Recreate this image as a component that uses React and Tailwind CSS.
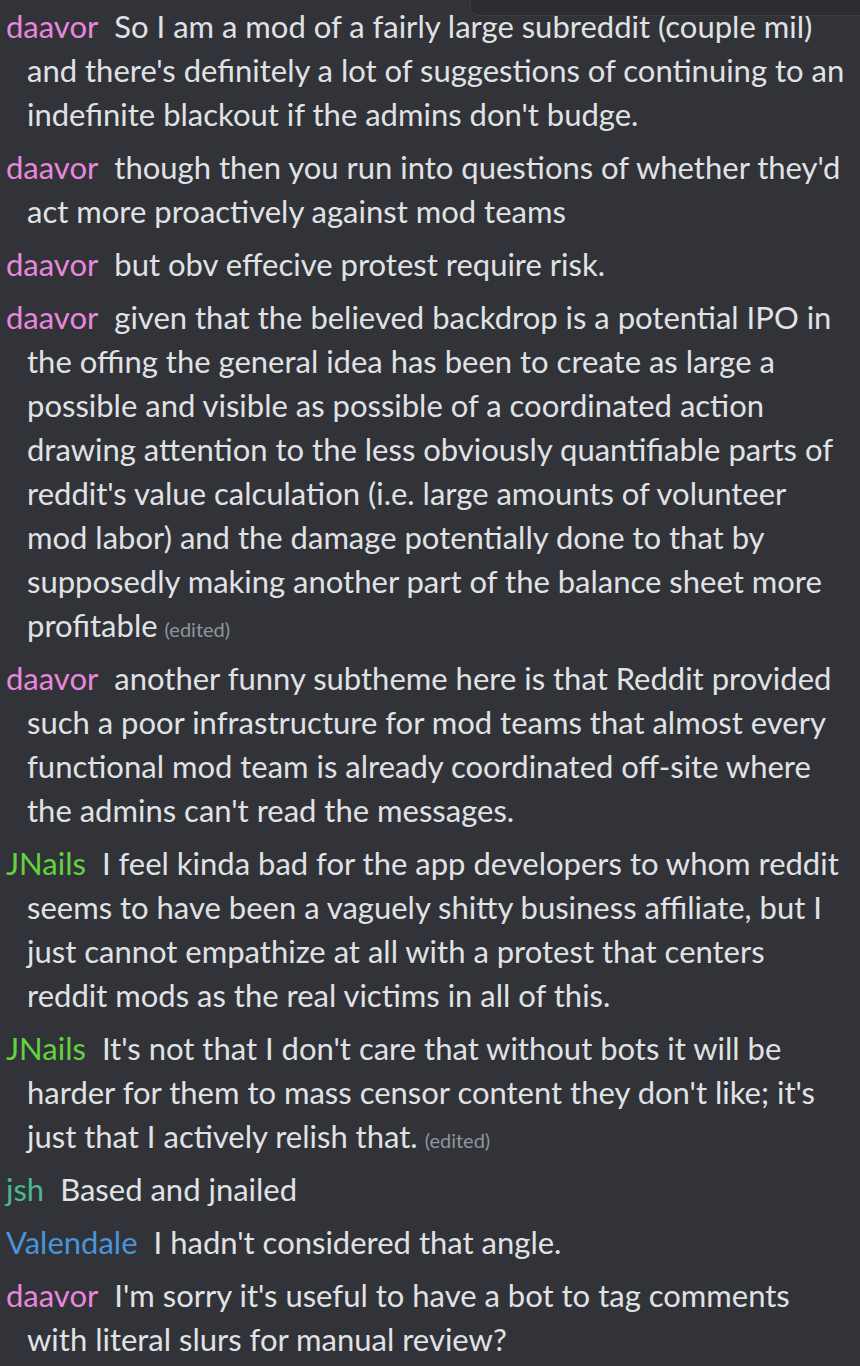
import React from 'react'

const colors = {
  daavor: 'text-[#ea87dc]',
  JNails: 'text-[#62d33e]',
  jsh: 'text-[#49b78f]',
  Valendale: 'text-[#4a94da]',
}

const messages = [
  {
    user: 'daavor',
    lines: [
      'So I am a mod of a fairly large subreddit (couple mil)',
      "and there's definitely a lot of suggestions of continuing to an",
      "indefinite blackout if the admins don't budge.",
    ],
  },
  {
    user: 'daavor',
    lines: [
      "though then you run into questions of whether they'd",
      'act more proactively against mod teams',
    ],
  },
  { user: 'daavor', lines: ['but obv effecive protest require risk.'] },
  {
    user: 'daavor',
    lines: [
      'given that the believed backdrop is a potential IPO in',
      'the offing the general idea has been to create as large a',
      'possible and visible as possible of a coordinated action',
      'drawing attention to the less obviously quantifiable parts of',
      "reddit's value calculation (i.e. large amounts of volunteer",
      'mod labor) and the damage potentially done to that by',
      'supposedly making another part of the balance sheet more',
      'profitable',
    ],
    edited: true,
  },
  {
    user: 'daavor',
    lines: [
      'another funny subtheme here is that Reddit provided',
      'such a poor infrastructure for mod teams that almost every',
      'functional mod team is already coordinated off-site where',
      "the admins can't read the messages.",
    ],
  },
  {
    user: 'JNails',
    lines: [
      'I feel kinda bad for the app developers to whom reddit',
      'seems to have been a vaguely shitty business affiliate, but I',
      'just cannot empathize at all with a protest that centers',
      'reddit mods as the real victims in all of this.',
    ],
  },
  {
    user: 'JNails',
    lines: [
      "It's not that I don't care that without bots it will be",
      "harder for them to mass censor content they don't like; it's",
      'just that I actively relish that.',
    ],
    edited: true,
  },
  { user: 'jsh', lines: ['Based and jnailed'] },
  { user: 'Valendale', lines: ["I hadn't considered that angle."] },
  {
    user: 'daavor',
    lines: [
      "I'm sorry it's useful to have a bot to tag comments",
      'with literal slurs for manual review?',
    ],
  },
]

function Message({ user, lines, edited }) {
  return (
    <div className="pl-[27px] -indent-[21px] whitespace-nowrap">
      <span className={`${colors[user]} mr-[16px]`}>{user}</span>
      {lines.map((line, i) => (
        <React.Fragment key={i}>
          {i > 0 && <br />}
          {line}
        </React.Fragment>
      ))}
      {edited && (
        <span className="ml-[7px] text-[20px] leading-none text-[#8f959e]">(edited)</span>
      )}
    </div>
  )
}

export default function App() {
  return (
    <div
      className="relative w-[860px] h-[1366px] overflow-hidden bg-[#313338] text-[#e0e2e5] text-[31px] leading-[44px]"
      style={{ fontFamily: 'Lato, "Noto Sans", sans-serif' }}
    >
      {/* bottom edge of a popup cut off at the top */}
      <div className="absolute right-[-10px] top-[-20px] w-[400px] h-[36px] rounded-lg border border-[#3b3d43] bg-[#2b2d31]" />
      <div className="flex flex-col gap-[9px] pt-[4px]">
        {messages.map((m, i) => (
          <Message key={i} {...m} />
        ))}
      </div>
    </div>
  )
}
